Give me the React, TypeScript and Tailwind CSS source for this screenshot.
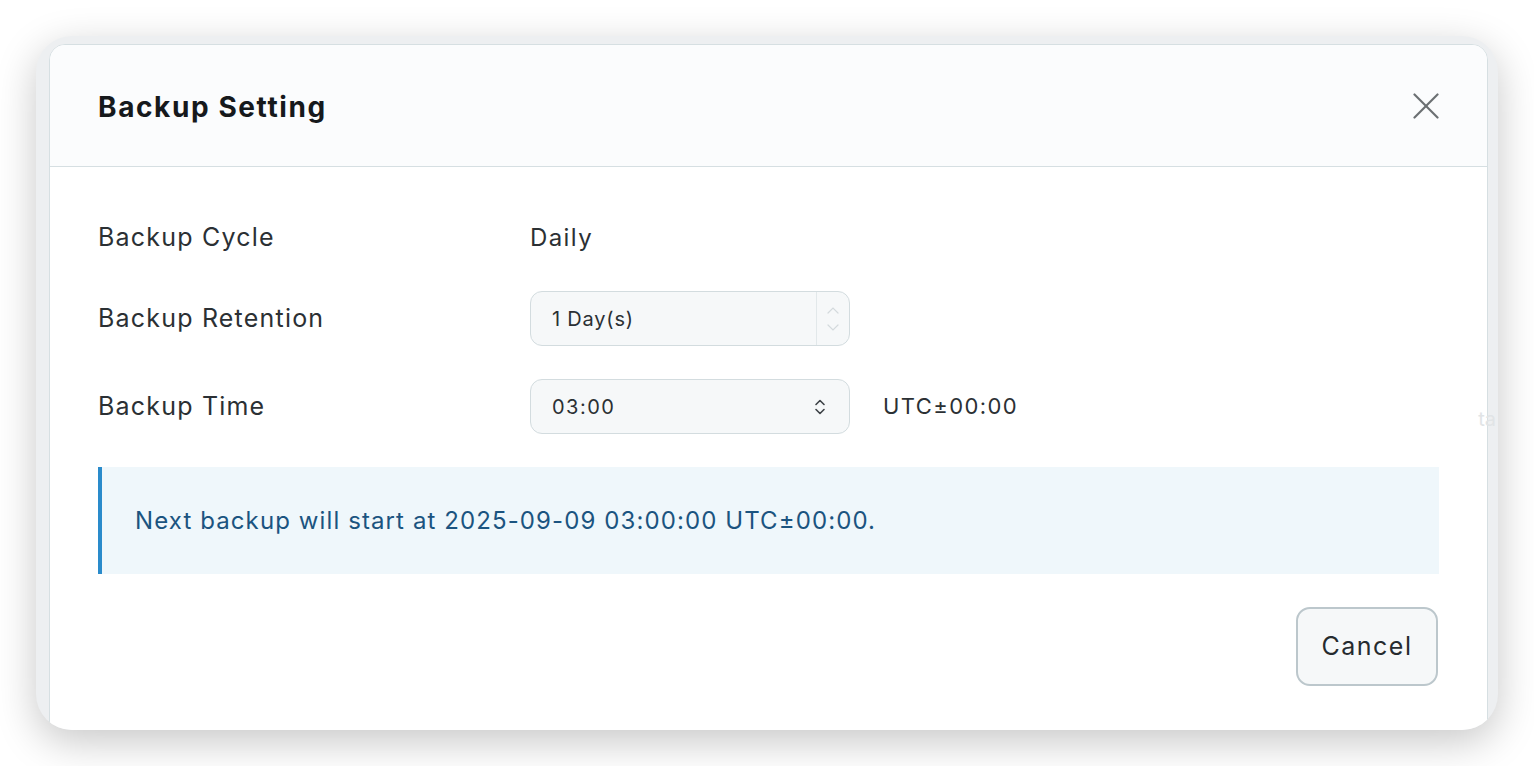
import React from 'react';

const font = { fontFamily: 'Inter, "Noto Sans", sans-serif' };

function CloseIcon() {
  return (
    <svg width="26" height="26" viewBox="0 0 26 26" fill="none" stroke="#6b6f72" strokeWidth="2.2" strokeLinecap="round">
      <path d="M1.5 1.5 24.5 24.5" />
      <path d="M24.5 1.5 1.5 24.5" />
    </svg>
  );
}

function UpDownIcon({ color, className }: { color: string; className?: string }) {
  return (
    <svg width="14" height="20" viewBox="0 0 14 20" fill="none" stroke={color} strokeWidth="1.6" strokeLinecap="round" strokeLinejoin="round" className={className}>
      <path d="M3 7.5 7 3.5l4 4" />
      <path d="M3 12.5 7 16.5l4-4" />
    </svg>
  );
}

export default function App() {
  return (
    <div className="min-h-screen bg-white pl-[36px] pt-[36px]" style={font}>
      <div className="relative w-[1462px] h-[694px] rounded-[36px] bg-[#edeff1] overflow-hidden pl-[13px] pr-[10px] pt-[8px] shadow-[0_12px_40px_rgba(0,0,0,0.22)]">
        {/* page text peeking out behind the modal */}
        <span className="absolute right-[2px] top-[368px] text-[20px] text-[#e1e4e6] z-20">ta</span>

        <div className="relative z-10 h-[760px] bg-white border border-[#d6dfe2] rounded-[16px] overflow-hidden">
          {/* Header */}
          <div className="h-[122px] bg-[#fbfcfd] border-b border-[#d6dfe2] px-12 flex items-center justify-between">
            <h2 className="text-[28px] font-bold text-[#16191c] tracking-[1.6px] pt-[2px]">Backup Setting</h2>
            <button className="w-[26px] h-[26px] flex items-center justify-center">
              <CloseIcon />
            </button>
          </div>

          {/* Body */}
          <div className="px-12 pt-[51px] flex flex-col gap-[33px] text-[#2b3034]">
            <div className="h-[40px] flex items-center">
              <div className="w-[432px] text-[25px] tracking-[1.2px]">Backup Cycle</div>
              <div className="text-[24px] tracking-[1.4px]">Daily</div>
            </div>

            <div className="h-[55px] flex items-center">
              <div className="w-[432px] text-[25px] tracking-[1.2px]">Backup Retention</div>
              <div className="w-[320px] h-[55px] rounded-[12px] border-[1.5px] border-[#d3dcdf] bg-[#f6f8f9] flex items-center overflow-hidden">
                <span className="flex-1 pl-[21px] text-[20px] tracking-[0.8px]">1 Day(s)</span>
                <div className="w-[33px] h-full border-l-[1.5px] border-[#e2e8ea] flex flex-col items-center justify-center gap-[10px]">
                  <svg width="12" height="7" viewBox="0 0 12 7" fill="none" stroke="#d4dadd" strokeWidth="1.2" strokeLinecap="round">
                    <path d="M1 6 6 1l5 5" />
                  </svg>
                  <svg width="12" height="7" viewBox="0 0 12 7" fill="none" stroke="#d4dadd" strokeWidth="1.2" strokeLinecap="round">
                    <path d="M1 1 6 6l5-5" />
                  </svg>
                </div>
              </div>
            </div>

            <div className="h-[55px] flex items-center">
              <div className="w-[432px] text-[25px] tracking-[1.2px]">Backup Time</div>
              <div className="w-[320px] h-[55px] rounded-[12px] border-[1.5px] border-[#d3dcdf] bg-[#f6f8f9] flex items-center justify-between pl-[21px] pr-[22px]">
                <span className="text-[20px] tracking-[1.5px]">03:00</span>
                <UpDownIcon color="#3d4246" />
              </div>
              <span className="ml-[33px] text-[22px] tracking-[1.4px]">UTC±00:00</span>
            </div>

            <div className="h-[107px] bg-[#eff7fb] border-l-4 border-[#2a8bcb] flex items-center pl-[33px]">
              <p className="text-[24px] tracking-[1.1px] text-[#1b5480]">Next backup will start at 2025-09-09 03:00:00 UTC±00:00.</p>
            </div>

            <div className="flex justify-end pr-px">
              <button className="w-[142px] h-[79px] rounded-[14px] border-2 border-[#bcc7cc] bg-[#f6f8f9] text-[25px] tracking-[1.5px] text-[#262b2f]">
                Cancel
              </button>
            </div>
          </div>
        </div>
      </div>
    </div>
  );
}
